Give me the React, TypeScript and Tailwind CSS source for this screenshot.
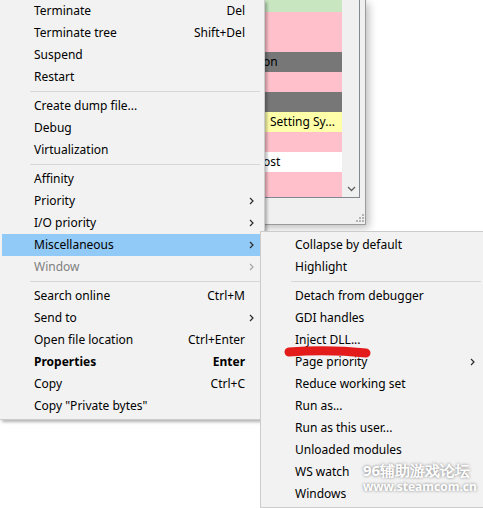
import React from 'react';
import clsx from 'clsx';

type Item =
  | 'sep'
  | {
      label: string;
      shortcut?: string;
      sub?: boolean;
      bold?: boolean;
      disabled?: boolean;
      active?: boolean;
    };

const mainItems: Item[] = [
  { label: 'Terminate', shortcut: 'Del' },
  { label: 'Terminate tree', shortcut: 'Shift+Del' },
  { label: 'Suspend' },
  { label: 'Restart' },
  'sep',
  { label: 'Create dump file...' },
  { label: 'Debug' },
  { label: 'Virtualization' },
  'sep',
  { label: 'Affinity' },
  { label: 'Priority', sub: true },
  { label: 'I/O priority', sub: true },
  { label: 'Miscellaneous', sub: true, active: true },
  { label: 'Window', sub: true, disabled: true },
  'sep',
  { label: 'Search online', shortcut: 'Ctrl+M' },
  { label: 'Send to', sub: true },
  { label: 'Open file location', shortcut: 'Ctrl+Enter' },
  { label: 'Properties', shortcut: 'Enter', bold: true },
  { label: 'Copy', shortcut: 'Ctrl+C' },
  { label: 'Copy "Private bytes"' },
];

const miscItems: Item[] = [
  { label: 'Collapse by default' },
  { label: 'Highlight' },
  'sep',
  { label: 'Detach from debugger' },
  { label: 'GDI handles' },
  { label: 'Inject DLL...' },
  { label: 'Page priority', sub: true },
  { label: 'Reduce working set' },
  { label: 'Run as...' },
  { label: 'Run as this user...' },
  { label: 'Unloaded modules' },
  { label: 'WS watch' },
  { label: 'Windows' },
];

// rows of the process list; only the right end of each name shows past the menu
const rows = [
  { h: 'h-[12px]', bg: 'bg-[#c8e6c0]', text: '', pl: '' },
  { h: 'h-[40px]', bg: 'bg-[#ffc0cb]', text: '', pl: '' },
  { h: 'h-[20px]', bg: 'bg-[#777777]', text: 'on', pl: 'pl-[63px]' },
  { h: 'h-[20px]', bg: 'bg-[#ffc0cb]', text: '', pl: '' },
  { h: 'h-[20px]', bg: 'bg-[#777777]', text: '', pl: '' },
  { h: 'h-[20px]', bg: 'bg-[#ffffaa]', text: 'Setting Sy...', pl: 'pl-[70px]' },
  { h: 'h-[20px]', bg: 'bg-[#ffc0cb]', text: '', pl: '' },
  { h: 'h-[20px]', bg: 'bg-white', text: 'ost', pl: 'pl-[63px]' },
  { h: 'h-[25px]', bg: 'bg-[#ffc0cb]', text: '', pl: '' },
];

const Chevron = ({ muted }: { muted?: boolean }) => (
  <svg width="5" height="8" viewBox="0 0 5 8">
    <path d="M1 1 L4 4 L1 7" fill="none" stroke={muted ? '#a6a6a6' : '#2b2b2b'} strokeWidth="1.2" />
  </svg>
);

const MenuList = ({ items }: { items: Item[] }) => (
  <>
    {items.map((it, i) =>
      it === 'sep' ? (
        <div key={i} className="flex h-[7px] items-center pl-[28px]">
          <div className="h-px flex-1 bg-[#d7d7d7]" />
        </div>
      ) : (
        <div
          key={i}
          className={clsx(
            'flex h-[22px] items-center pl-[32px] whitespace-nowrap',
            it.active && 'bg-[#91c9f7]',
            it.disabled ? 'text-[#808080]' : 'text-black',
            it.bold && 'font-bold'
          )}
        >
          <span className="flex-1">{it.label}</span>
          {it.shortcut && <span>{it.shortcut}</span>}
          <span className="flex w-[15px] justify-end pr-[6px]">{it.sub && <Chevron muted={it.disabled} />}</span>
        </div>
      )
    )}
  </>
);

export default function App() {
  return (
    <div className="relative h-[508px] w-[483px] overflow-hidden bg-white font-['Noto_Sans',sans-serif] text-[12px] leading-[22px]">
      {/* process list window behind the menus */}
      <div className="absolute left-[200px] top-0 flex h-[225px] w-[166px] flex-col border-r border-b border-[#9a9a9a] bg-[#f0f0f0] shadow-[3px_3px_8px_rgba(0,0,0,0.25)]">
        <div className="flex h-[198px] w-[160px] border-r border-b border-[#828790]">
          <div className="flex flex-1 flex-col overflow-hidden">
            {rows.map((r, i) => (
              <div key={i} className={clsx('flex items-center overflow-hidden leading-[20px] text-black', r.h, r.bg, r.pl)}>
                {r.text && <span className="whitespace-nowrap">{r.text}</span>}
              </div>
            ))}
          </div>
          <div className="flex w-[17px] flex-col justify-end bg-[#f0f0f0] pb-[5px] pl-[5px]">
            <svg width="9" height="6" viewBox="0 0 9 6">
              <path d="M1 1 L4.5 4.5 L8 1" fill="none" stroke="#606060" strokeWidth="1.3" />
            </svg>
          </div>
        </div>
        <div className="flex flex-1 items-end justify-end pr-[1px] pb-[2px]">
          <svg width="9" height="9" viewBox="0 0 9 9">
            <g fill="#b4b4b4">
              <rect x="7" y="1" width="2" height="2" />
              <rect x="4" y="4" width="2" height="2" />
              <rect x="7" y="4" width="2" height="2" />
              <rect x="1" y="7" width="2" height="2" />
              <rect x="4" y="7" width="2" height="2" />
              <rect x="7" y="7" width="2" height="2" />
            </g>
          </svg>
        </div>
      </div>

      {/* main context menu */}
      <div className="absolute left-0 top-0 w-[265px] border-r border-b border-[#cccccc] bg-[#f2f2f2] pb-[2px] pl-[2px] pr-[4px] shadow-[2px_2px_3px_rgba(0,0,0,0.3)]">
        <MenuList items={mainItems} />
      </div>

      {/* Miscellaneous submenu */}
      <div className="absolute left-[260px] top-[231px] w-[226px] border border-[#cccccc] bg-[#f2f2f2] py-[2px] pl-[2px] pr-[4px]">
        <MenuList items={miscItems} />
      </div>

      {/* red marker stroke */}
      <svg className="absolute left-0 top-0" width="483" height="508" viewBox="0 0 483 508">
        <path d="M289 352 Q 328 349 366 353" fill="none" stroke="#e31b1b" strokeWidth="9" strokeLinecap="round" />
      </svg>

      {/* watermark */}
      <div className="absolute left-[363px] top-[461px] flex flex-col gap-[1px] font-bold text-white [text-shadow:0_0_3px_rgba(0,0,0,0.5)]">
        <span className="text-[15px] leading-[18px]">96辅助游戏论坛</span>
        <span className="text-[12px] leading-[14px]">www.steamcom.cn</span>
      </div>
    </div>
  );
}
